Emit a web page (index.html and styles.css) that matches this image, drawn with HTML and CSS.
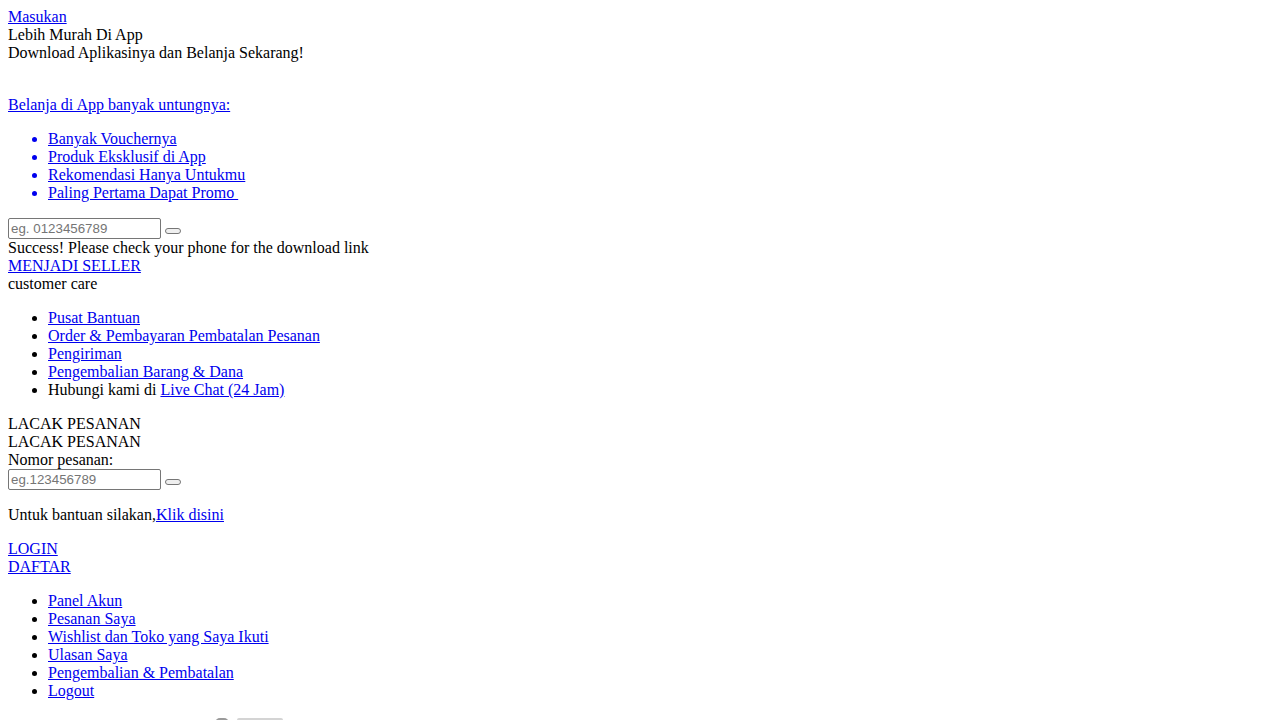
FILE: index.html
```html
<!DOCTYPE html>
<html lang="id">
<head>
    <meta charset="UTF-8">
    <meta name="viewport" content="width=device-width, initial-scale=1.0">
    <title>Lebih Murah Di App</title>
    <link rel="stylesheet" href="styles.css">
</head>
<body>

    <!-- App promo -->
    <a href="#" class="link">Masukan</a>
    <div class="promo-title">Lebih Murah Di App</div>
    <div class="promo-sub">Download Aplikasinya dan Belanja Sekarang!</div>
    <br>
    <a href="#" class="link benefits">
        <p>Belanja di App banyak untungnya:</p>
        <ul>
            <li>Banyak Vouchernya</li>
            <li>Produk Eksklusif di App</li>
            <li>Rekomendasi Hanya Untukmu</li>
            <li>Paling Pertama Dapat Promo&nbsp;</li>
        </ul>
    </a>
    <form class="sms-form">
        <input type="tel" class="field" placeholder="eg. 0123456789">
        <button type="button" class="btn"></button>
        <div class="sms-success">Success! Please check your phone for the download link</div>
    </form>
    <a href="#" class="link">MENJADI SELLER</a>

    <!-- Customer care -->
    <div class="care-title">customer care</div>
    <ul class="care-list">
        <li><a href="#" class="link">Pusat Bantuan</a></li>
        <li><a href="#" class="link">Order &amp; Pembayaran Pembatalan Pesanan</a></li>
        <li><a href="#" class="link">Pengiriman</a></li>
        <li><a href="#" class="link">Pengembalian Barang &amp; Dana</a></li>
        <li>Hubungi kami di <a href="#" class="link">Live Chat (24 Jam)</a></li>
    </ul>

    <!-- Track order -->
    <div class="track">
        <div class="track-toggle">LACAK PESANAN</div>
        <div class="track-title">LACAK PESANAN</div>
        <label for="orderNumber">Nomor pesanan:</label>
        <div class="track-row">
            <input type="text" id="orderNumber" class="field" placeholder="eg.123456789">
            <button type="button" class="btn"></button>
        </div>
        <p>Untuk bantuan silakan,<a href="#" class="link">Klik disini</a></p>
    </div>

    <!-- Account -->
    <a href="#" class="link account-link">LOGIN</a>
    <a href="#" class="link account-link">DAFTAR</a>
    <ul class="account-list">
        <li><a href="#" class="link">Panel Akun</a></li>
        <li><a href="#" class="link">Pesanan Saya</a></li>
        <li><a href="#" class="link">Wishlist dan Toko yang Saya Ikuti</a></li>
        <li><a href="#" class="link">Ulasan Saya</a></li>
        <li><a href="#" class="link">Pengembalian &amp; Pembatalan</a></li>
        <li><a href="#" class="link">Logout</a></li>
    </ul>

    <div class="badge">
        <svg width="80" height="30" viewBox="0 0 80 30">
            <rect x="0" y="2" width="14" height="22" rx="5" fill="#9a9a9a"/>
            <rect x="22" y="2" width="46" height="8" rx="2" fill="#d4d4d4"/>
        </svg>
    </div>

</body>
</html>
```

FILE: styles.css
```css
body {
    margin: 8px;
    font-family: "Liberation Serif", "Times New Roman", serif;
    font-size: 16px;
    line-height: 18px;
    color: #000;
    background: #fff;
}

.link {
    color: #0000ee;
    text-decoration: underline;
}

.benefits {
    display: block;
}

.sms-form {
    margin: 0;
}

.field {
    width: 153px;
    height: 21px;
    box-sizing: border-box;
    padding: 1px 2px;
    border: 1px solid #767676;
    border-radius: 2px;
    font-family: "Liberation Sans", Arial, sans-serif;
    font-size: 13.33px;
    vertical-align: baseline;
}

.field::placeholder {
    color: #757575;
}

.btn {
    width: 16px;
    height: 6px;
    padding: 0;
    margin: 0;
    border: 1px solid #767676;
    border-radius: 3px;
    background: #efefef;
    vertical-align: baseline;
}

.account-link {
    display: block;
}

.track p {
    margin: 16px 0;
}

.track label {
    display: block;
}

.badge {
    margin-top: 16px;
    padding-left: 207px;
    height: 30px;
}
```
